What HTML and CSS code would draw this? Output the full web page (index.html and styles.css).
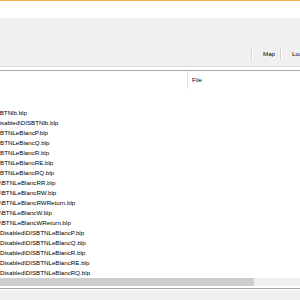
FILE: index.html
```html
<!DOCTYPE html>
<html lang="en">
<head>
    <meta charset="UTF-8">
    <title>Icon Browser</title>
    <link rel="stylesheet" href="styles.css">
</head>
<body>
<div class="window">
    <div class="accent"></div>
    <div class="title-gap"></div>

    <div class="toolbar">
        <span class="tool-sep"></span>
        <span class="tool">Map</span>
        <span class="tool-sep"></span>
        <span class="tool">Load</span>
    </div>
    <div class="rule-light"></div>
    <div class="rule-gap"></div>
    <div class="rule-dark"></div>

    <div class="list-header">
        <span class="col-name"></span>
        <span class="col-file">File</span>
    </div>

    <ul class="rows">
        <li class="row cut-1">\BTNlb.blp</li>
        <li class="row cut-2">Disabled\DISBTNlb.blp</li>
        <li class="row">BTNLeBlancP.blp</li>
        <li class="row">BTNLeBlancQ.blp</li>
        <li class="row">BTNLeBlancR.blp</li>
        <li class="row">BTNLeBlancRE.blp</li>
        <li class="row">BTNLeBlancRQ.blp</li>
        <li class="row">\BTNLeBlancRR.blp</li>
        <li class="row">\BTNLeBlancRW.blp</li>
        <li class="row">\BTNLeBlancRWReturn.blp</li>
        <li class="row">\BTNLeBlancW.blp</li>
        <li class="row">\BTNLeBlancWReturn.blp</li>
        <li class="row">Disabled\DISBTNLeBlancP.blp</li>
        <li class="row">Disabled\DISBTNLeBlancQ.blp</li>
        <li class="row">Disabled\DISBTNLeBlancR.blp</li>
        <li class="row">Disabled\DISBTNLeBlancRE.blp</li>
        <li class="row">Disabled\DISBTNLeBlancRQ.blp</li>
    </ul>

    <div class="hscroll">
        <div class="hscroll-thumb"></div>
    </div>
    <div class="status-gap"></div>
    <div class="status-line"></div>
    <div class="status-light"></div>
    <div class="statusbar"></div>
</div>
</body>
</html>
```

FILE: styles.css
```css
body {
    margin: 0;
    background-color: #FFFFFF;
    font-family: "Liberation Sans", Arial, sans-serif;
    font-size: 6.2px;
    color: #000000;
}
.window {
    width: 300px;
    height: 300px;
    overflow: hidden;
    display: flex;
    flex-direction: column;
}
.accent {
    height: 1px;
    background-color: #F6B14C; /* orange title accent */
    flex-shrink: 0;
}
.title-gap {
    height: 17px;
    flex-shrink: 0;
}
.toolbar {
    height: 48px;
    flex-shrink: 0;
    background-color: #F0F0F0;
    display: flex;
    align-items: flex-start;
    padding-top: 29px;
    padding-left: 251px;
    box-sizing: border-box;
    white-space: nowrap;
}
.tool-sep {
    width: 1px;
    height: 13px;
    background-color: #D5D5D5;
    border-right: 1px solid #FFFFFF;
    flex-shrink: 0;
}
.tool {
    line-height: 13px;
    padding: 0 6px 0 10px;
}
.tool + .tool-sep {
    margin-left: -1px;
}
.rule-light {
    height: 1px;
    background-color: #DCDCDC;
    flex-shrink: 0;
}
.rule-gap {
    height: 3px;
    flex-shrink: 0;
}
.rule-dark {
    height: 1px;
    background-color: #A4A7AE;
    flex-shrink: 0;
}
.list-header {
    height: 18px;
    flex-shrink: 0;
    display: flex;
}
.col-name {
    width: 187px;
    border-right: 1px solid #E5E5E5;
}
.col-file {
    padding-left: 4px;
    line-height: 18px;
}
.rows {
    list-style: none;
    margin: 0;
    padding: 19px 0 0 0;
    flex-shrink: 0;
}
.row {
    height: 10px;
    line-height: 10px;
    white-space: nowrap;
}
.cut-1 {
    text-indent: -2px;
}
.cut-2 {
    text-indent: -5px;
}
.hscroll {
    height: 8px;
    flex-shrink: 0;
    background-color: #F0F0F0;
    display: flex;
}
.hscroll-thumb {
    width: 254px;
    background-color: #CDCDCD;
}
.status-gap {
    height: 2px;
    flex-shrink: 0;
}
.status-line {
    height: 1px;
    background-color: #A4A7AE;
    flex-shrink: 0;
}
.status-light {
    height: 1px;
    background-color: #FAFAFA;
    flex-shrink: 0;
}
.statusbar {
    flex: 1;
    background-color: #F0F0F0;
}
```
